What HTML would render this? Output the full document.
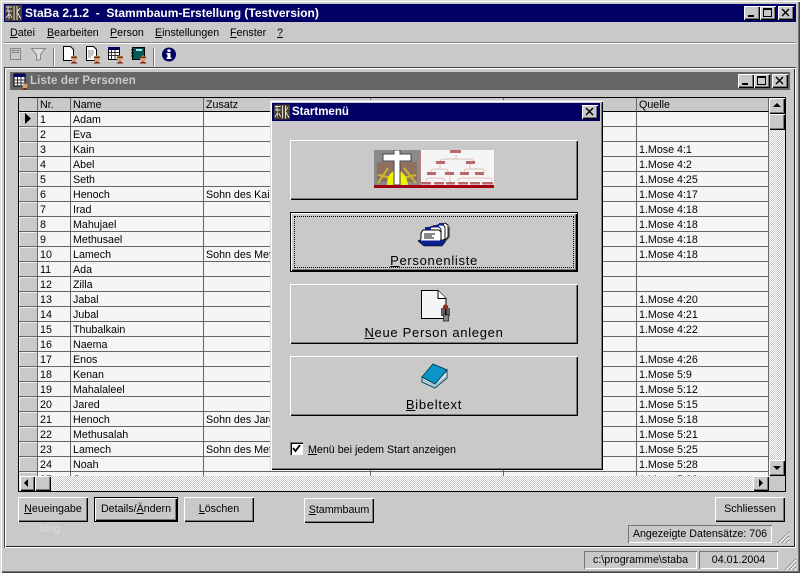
<!DOCTYPE html>
<html><head><meta charset="utf-8"><style>
*{box-sizing:border-box}
html,body{margin:0;padding:0}
body{width:800px;height:573px;overflow:hidden;position:relative;background:#c9c9c9;font:10.7px/14px "Liberation Sans",Arial,sans-serif;color:#000}
.a{position:absolute}
u{text-decoration:underline}
.t{position:absolute;white-space:nowrap}
.btn{position:absolute;background:#c9c9c9;box-shadow:inset 1px 1px 0 #fff,inset -1px -1px 0 #000,inset -2px -2px 0 #777;text-align:center;white-space:nowrap}
.wb{position:absolute;width:16px;height:14px;background:#c9c9c9;box-shadow:inset 1px 1px 0 #fff,inset -1px -1px 0 #000,inset -2px -2px 0 #777}
.dith{position:absolute;background:repeating-conic-gradient(#fff 0 25%,#c9c9c9 0 50%) 0 0/2px 2px}
.sunk{position:absolute;box-shadow:inset 1px 1px 0 #777,inset -1px -1px 0 #fff;text-align:center;white-space:nowrap;line-height:19px}
table{border-collapse:separate;border-spacing:0;table-layout:fixed;width:750px;font-size:10.7px}
td,th{height:15px;padding:2px 0 0 2px;font-weight:normal;text-align:left;border-right:1px solid #666;border-bottom:1px solid #666;background:#f5f5f5;white-space:nowrap;overflow:hidden;line-height:12px;vertical-align:top}
th{height:14px;background:#c9c9c9;border-bottom-color:#000;line-height:11px}
td:first-child{background:#c9c9c9;padding:0;box-shadow:inset 1px 1px 0 #eee}
.big{font:13px/15px "Liberation Sans",Arial,sans-serif;letter-spacing:.7px;position:absolute;left:0;right:0;text-align:center}
</style></head><body>
<div class="a" style="left:0;top:0;width:800px;height:573px;box-shadow:inset 1px 1px 0 #ddd,inset 2px 2px 0 #fff,inset -1px -1px 0 #444,inset -2px -2px 0 #777"></div>

<div class="a" style="left:4px;top:4px;width:792px;height:18px;background:#000066"></div>
<svg class="a" style="left:5px;top:5px" width="17" height="16" viewBox="0 0 17 16" shape-rendering="crispEdges"><rect width="17" height="16" fill="#4a4030"/><path d="M1 2h6M3 2v4M1 6h6M4 6v8M1 13l3-4M7 13L5 9M9 1v14M12 1v14M15 3l-3 4 4 7" stroke="#e4e0d8" fill="none"/></svg>
<div class="t" style="left:25px;top:5px;color:#fff;font:bold 12px/16px 'Liberation Sans',sans-serif;white-space:pre">StaBa 2.1.2  -  Stammbaum-Erstellung (Testversion)</div>
<div class="wb" style="left:744px;top:6px"><div class="a" style="left:4px;top:9px;width:6px;height:2px;background:#000"></div></div>
<div class="wb" style="left:760px;top:6px"><div class="a" style="left:3px;top:2px;width:9px;height:9px;border:1px solid #000;border-top-width:2px"></div></div>
<div class="wb" style="left:778px;top:6px"><svg class="a" style="left:3px;top:2px" width="9" height="9" viewBox="0 0 9 9"><path d="M1 1l7 7M8 1l-7 7" stroke="#000" stroke-width="1.4"/></svg></div>

<div class="t" style="left:10px;top:26px"><u>D</u>atei</div>
<div class="t" style="left:47px;top:26px"><u>B</u>earbeiten</div>
<div class="t" style="left:110px;top:26px"><u>P</u>erson</div>
<div class="t" style="left:155px;top:26px"><u>E</u>instellungen</div>
<div class="t" style="left:230px;top:26px"><u>F</u>enster</div>
<div class="t" style="left:277px;top:26px"><u>?</u></div>
<div class="a" style="left:4px;top:42px;width:792px;height:1px;background:#888"></div>
<div class="a" style="left:4px;top:43px;width:792px;height:1px;background:#fff"></div>

<svg class="a" style="left:0;top:44px" width="190" height="22" viewBox="0 0 190 22">
<path d="M53.5 4v18" stroke="#777"/><path d="M54.5 4v18" stroke="#fff"/>
<path d="M153.5 4v18" stroke="#777"/><path d="M154.5 4v18" stroke="#fff"/>
<circle cx="169" cy="10.5" r="7" fill="#000066"/><rect x="167.5" y="5.5" width="3" height="2.5" fill="#fff"/><path d="M166.5 9h4v4.500h1v1.500h-5v-1.500h1v-3h-1z" fill="#fff"/>
<g transform="translate(0,-3)">
<rect x="10.5" y="7.5" width="10" height="11" fill="none" stroke="#888"/><rect x="12.5" y="9.5" width="6" height="2" fill="none" stroke="#888"/>
<path d="M31.5 7.5h14l-5 6v5l-4 1v-6z" fill="#ddd" stroke="#888"/>
<path d="M63.5 5.500h7l3 3v11h-10z" fill="#fff" stroke="#000"/>
<circle cx="74" cy="17.500" r="3" fill="#d8a070"/><path d="M71 15.500h6v1.500h-6z" fill="#703010"/><path d="M70.500 22.500q3.500-4 7 0z" fill="#802010"/>
<path d="M86.500 5.500h7l3 3v11h-10z" fill="#fff" stroke="#000"/><path d="M88 10h6M88 12h6M88 14h5M88 16h3" stroke="#888"/>
<circle cx="97" cy="17.500" r="3" fill="#d8a070"/><path d="M94 15.500h6v1.500h-6z" fill="#703010"/><path d="M93.500 22.500q3.500-4 7 0z" fill="#802010"/>
<rect x="108.500" y="6.500" width="11" height="12" fill="#fff" stroke="#000"/><rect x="108" y="6" width="12" height="3" fill="#000060"/><path d="M111.500 9v9M115 9v9M109 11.500h10M109 14.500h10" stroke="#333"/>
<circle cx="120" cy="17.500" r="3" fill="#d8a070"/><path d="M117 15.500h6v1.500h-6z" fill="#703010"/><path d="M116.500 22.500q3.500-4 7 0z" fill="#802010"/>
<rect x="132.500" y="6.500" width="12" height="12" fill="#005a5a" stroke="#000"/><path d="M131 9h3M131 12h3M131 15h3" stroke="#000"/><rect x="136" y="8" width="6" height="2" fill="#bdd"/>
<circle cx="143" cy="17.500" r="3" fill="#d8a070"/><path d="M140 15.500h6v1.500h-6z" fill="#703010"/><path d="M139.500 22.500q3.500-4 7 0z" fill="#802010"/>
</g>
</svg>

<!-- MDI child -->
<div class="a" style="left:4px;top:67px;width:792px;height:481px;box-shadow:inset 1px 1px 0 #444,inset 2px 2px 0 #fff,inset -1px -1px 0 #fff,inset -2px -2px 0 #222"></div>
<div class="a" style="left:10px;top:72px;width:780px;height:18px;background:#666"></div>
<svg class="a" style="left:13px;top:73px" width="17" height="17" viewBox="0 0 17 17"><rect x="1" y="1" width="11" height="12" fill="#fff" stroke="#000"/><rect x="1" y="1" width="11" height="3" fill="#000060"/><path d="M4.500 4v9M8 4v9M1 7h11M1 10h11" stroke="#333"/><circle cx="12" cy="13" r="2.500" fill="#d8a070"/><path d="M9 17q3-4 6 0z" fill="#802010"/></svg>
<div class="t" style="left:30px;top:74px;color:#c9c9c9;font:bold 11.500px/14px 'Liberation Sans',sans-serif;letter-spacing:.13px">Liste der Personen</div>
<div class="wb" style="left:738px;top:74px"><div class="a" style="left:4px;top:9px;width:6px;height:2px;background:#000"></div></div>
<div class="wb" style="left:754px;top:74px"><div class="a" style="left:3px;top:2px;width:9px;height:9px;border:1px solid #000;border-top-width:2px"></div></div>
<div class="wb" style="left:772px;top:74px"><svg class="a" style="left:3px;top:2px" width="9" height="9" viewBox="0 0 9 9"><path d="M1 1l7 7M8 1l-7 7" stroke="#000" stroke-width="1.4"/></svg></div>

<!-- grid -->
<div class="a" style="left:18px;top:97px;width:768px;height:395px;border:1px solid #000;background:#c9c9c9"></div>
<div class="a" style="left:19px;top:98px;width:750px;height:378px;overflow:hidden">
<table><colgroup><col style="width:19px"><col style="width:33px"><col style="width:133px"><col style="width:167px"><col style="width:133px"><col style="width:133px"><col style="width:132px"></colgroup>
<tr><th></th><th>Nr.</th><th>Name</th><th>Zusatz</th><th></th><th></th><th>Quelle</th></tr>
<tr><td><svg width="18" height="14" style="display:block"><path d="M6 1v11l6-5.500z" fill="#000"/></svg></td><td>1</td><td>Adam</td><td></td><td></td><td></td><td></td></tr>
<tr><td></td><td>2</td><td>Eva</td><td></td><td></td><td></td><td></td></tr>
<tr><td></td><td>3</td><td>Kain</td><td></td><td></td><td></td><td>1.Mose 4:1</td></tr>
<tr><td></td><td>4</td><td>Abel</td><td></td><td></td><td></td><td>1.Mose 4:2</td></tr>
<tr><td></td><td>5</td><td>Seth</td><td></td><td></td><td></td><td>1.Mose 4:25</td></tr>
<tr><td></td><td>6</td><td>Henoch</td><td>Sohn des Kain</td><td></td><td></td><td>1.Mose 4:17</td></tr>
<tr><td></td><td>7</td><td>Irad</td><td></td><td></td><td></td><td>1.Mose 4:18</td></tr>
<tr><td></td><td>8</td><td>Mahujael</td><td></td><td></td><td></td><td>1.Mose 4:18</td></tr>
<tr><td></td><td>9</td><td>Methusael</td><td></td><td></td><td></td><td>1.Mose 4:18</td></tr>
<tr><td></td><td>10</td><td>Lamech</td><td>Sohn des Methusael</td><td></td><td></td><td>1.Mose 4:18</td></tr>
<tr><td></td><td>11</td><td>Ada</td><td></td><td></td><td></td><td></td></tr>
<tr><td></td><td>12</td><td>Zilla</td><td></td><td></td><td></td><td></td></tr>
<tr><td></td><td>13</td><td>Jabal</td><td></td><td></td><td></td><td>1.Mose 4:20</td></tr>
<tr><td></td><td>14</td><td>Jubal</td><td></td><td></td><td></td><td>1.Mose 4:21</td></tr>
<tr><td></td><td>15</td><td>Thubalkain</td><td></td><td></td><td></td><td>1.Mose 4:22</td></tr>
<tr><td></td><td>16</td><td>Naema</td><td></td><td></td><td></td><td></td></tr>
<tr><td></td><td>17</td><td>Enos</td><td></td><td></td><td></td><td>1.Mose 4:26</td></tr>
<tr><td></td><td>18</td><td>Kenan</td><td></td><td></td><td></td><td>1.Mose 5:9</td></tr>
<tr><td></td><td>19</td><td>Mahalaleel</td><td></td><td></td><td></td><td>1.Mose 5:12</td></tr>
<tr><td></td><td>20</td><td>Jared</td><td></td><td></td><td></td><td>1.Mose 5:15</td></tr>
<tr><td></td><td>21</td><td>Henoch</td><td>Sohn des Jared</td><td></td><td></td><td>1.Mose 5:18</td></tr>
<tr><td></td><td>22</td><td>Methusalah</td><td></td><td></td><td></td><td>1.Mose 5:21</td></tr>
<tr><td></td><td>23</td><td>Lamech</td><td>Sohn des Methusalah</td><td></td><td></td><td>1.Mose 5:25</td></tr>
<tr><td></td><td>24</td><td>Noah</td><td></td><td></td><td></td><td>1.Mose 5:28</td></tr>
<tr><td></td><td>25</td><td>Sem</td><td></td><td></td><td></td><td>1.Mose 5:32</td></tr>
</table></div>
<!-- v scrollbar -->
<div class="dith" style="left:769px;top:98px;width:16px;height:378px"></div>
<div class="wb" style="left:769px;top:98px;width:16px;height:16px"><div class="a" style="left:4px;top:5px;border:4px solid transparent;border-top:0;border-bottom:4px solid #000"></div></div>
<div class="wb" style="left:769px;top:114px;width:16px;height:16px"></div>
<div class="wb" style="left:769px;top:460px;width:16px;height:16px"><div class="a" style="left:4px;top:6px;border:4px solid transparent;border-bottom:0;border-top:4px solid #000"></div></div>
<!-- h scrollbar -->
<div class="dith" style="left:19px;top:476px;width:750px;height:15px"></div>
<div class="wb" style="left:20px;top:476px;width:15px;height:15px"><div class="a" style="left:4px;top:3px;border:4px solid transparent;border-left:0;border-right:4px solid #000"></div></div>
<div class="wb" style="left:35px;top:476px;width:16px;height:15px"></div>
<div class="wb" style="left:753px;top:476px;width:16px;height:15px"><div class="a" style="left:6px;top:3px;border:4px solid transparent;border-right:0;border-left:4px solid #000"></div></div>
<div class="a" style="left:769px;top:476px;width:16px;height:15px;background:#c9c9c9"></div>

<!-- bottom buttons -->
<div class="btn" style="left:18px;top:497px;width:70px;height:25px;line-height:25px"><u>N</u>eueingabe</div>
<div class="btn" style="left:94px;top:497px;width:84px;height:25px;line-height:23px;border:1px solid #000;box-shadow:inset 1px 1px 0 #fff,inset -1px -1px 0 #000,inset -2px -2px 0 #777">Details/<u>Ä</u>ndern</div>
<div class="btn" style="left:184px;top:497px;width:70px;height:25px;line-height:25px"><u>L</u>öschen</div>
<div class="btn" style="left:304px;top:498px;width:70px;height:25px;line-height:25px"><u>S</u>tammbaum</div>
<div class="btn" style="left:715px;top:497px;width:70px;height:25px;line-height:25px">Schliessen</div>
<div class="t" style="left:40px;top:522px;color:#dcdcdc">blog</div>
<div class="sunk" style="left:628px;top:525px;width:144px;height:18px">Angezeigte Datensätze: 706</div>
<svg class="a" style="left:776px;top:530px" width="14" height="14"><path d="M2 13L13 2M6 13l7-7M10 13l3-3" stroke="#777" fill="none"/><path d="M3 13L13 3M7 13l6-6M11 13l2-2" stroke="#fff" fill="none"/></svg>

<!-- status -->
<div class="sunk" style="left:584px;top:551px;width:113px;height:18px">c:\programme\staba</div>
<div class="sunk" style="left:699px;top:551px;width:79px;height:18px">04.01.2004</div>
<svg class="a" style="left:783px;top:557px" width="14" height="14"><path d="M2 13L13 2M6 13l7-7M10 13l3-3" stroke="#777" fill="none"/><path d="M3 13L13 3M7 13l6-6M11 13l2-2" stroke="#fff" fill="none"/></svg>

<!-- dialog -->
<div class="a" style="left:270px;top:100px;width:333px;height:370px;background:#c9c9c9;box-shadow:inset 1px 1px 0 #ddd,inset 2px 2px 0 #fff,inset -1px -1px 0 #000,inset -2px -2px 0 #777"></div>
<div class="a" style="left:272px;top:103px;width:328px;height:18px;background:#000066"></div>
<svg class="a" style="left:274px;top:104px" width="16" height="16" viewBox="0 0 17 16" shape-rendering="crispEdges"><rect width="17" height="16" fill="#4a4030"/><path d="M1 2h6M3 2v4M1 6h6M4 6v8M1 13l3-4M7 13L5 9M9 1v14M12 1v14M15 3l-3 4 4 7" stroke="#e4e0d8" fill="none"/></svg>
<div class="t" style="left:292px;top:104px;color:#fff;font:bold 11.500px/16px 'Liberation Sans',sans-serif">Startmenü</div>
<div class="wb" style="left:582px;top:105px"><svg class="a" style="left:3px;top:2px" width="9" height="9" viewBox="0 0 9 9"><path d="M1 1l7 7M8 1l-7 7" stroke="#000" stroke-width="1.4"/></svg></div>

<div class="btn" style="left:290px;top:140px;width:288px;height:60px"></div>
<svg class="a" style="left:374px;top:150px;filter:blur(.35px)" width="120" height="38" viewBox="0 0 120 38">
<rect width="46" height="38" fill="#8a8a8a"/><rect x="46" width="74" height="38" fill="#f5f5f5"/>
<rect x="46" width="1" height="35" fill="#c08080"/>
<path d="M3 12h40v20H3z" fill="#8f7060"/>
<path d="M4 33L14 18M42 33L30 18M4 25l14 3M42 25l-13 3" stroke="#c8b830" stroke-width="2" fill="none"/>
<path d="M13 35q0-11 7-14v14zM26 35v-14q7 4 8 14z" fill="#f0f000"/>
<path d="M9 4h11V0h6v4h11v7H26v24h-6V11H9z" fill="#fff" stroke="#444"/>
<rect y="35" width="120" height="3" fill="#a00010"/>
<g fill="none" stroke="#e0c0b8"><path d="M82 5v4M66 12q0-3 6-3h22q6 0 6 3M57 22q0-3 5-3h8q4 0 4 3M66 14v5M96 14v5M90 22q0-3 4-3h12q5 0 5 3"/><path d="M52 31q0-3 5-3h9q5 0 5 3M84 31q0-3 5-3h25q4 0 4 3M76 26v6"/></g>
<g fill="#b86a6a"><rect x="76" y="0" width="11" height="3"/><rect x="62" y="11" width="9" height="3"/><rect x="92" y="11" width="9" height="3"/><rect x="53" y="22" width="9" height="3"/><rect x="71" y="22" width="9" height="3"/><rect x="86" y="22" width="9" height="3"/><rect x="101" y="22" width="9" height="3"/><rect x="47" y="32" width="10" height="2.500"/><rect x="60" y="32" width="10" height="2.500"/><rect x="72" y="32" width="9" height="2.500"/><rect x="84" y="32" width="10" height="2.500"/><rect x="96" y="32" width="10" height="2.500"/><rect x="108" y="32" width="11" height="2.500"/></g>
</svg>

<div class="btn" style="left:290px;top:212px;width:288px;height:60px;border:1px solid #000;box-shadow:inset 1px 1px 0 #fff,inset -1px -1px 0 #000,inset -2px -2px 0 #777"><div class="a" style="left:3px;top:3px;right:3px;bottom:3px;border:1px dotted #000"></div>
<div class="big" style="top:40px"><u>P</u>ersonenliste</div></div>
<svg class="a" style="left:418px;top:221px" width="33" height="26" viewBox="0 0 33 26">
<path d="M7 25l18-1 7-8V5l-6 7z" fill="#666"/>
<path d="M16 5l11-3 3 2v12l-4 4z" fill="#fff" stroke="#000" stroke-width=".9"/>
<path d="M12 6l12-3 3 3v13l-3 2z" fill="#fff" stroke="#000" stroke-width=".9"/>
<path d="M8 7l12-2 3 3v13l-3 1z" fill="#fff" stroke="#000" stroke-width=".9"/>
<path d="M5 9h16l2 2v10H3V12z" fill="#fff" stroke="#000"/>
<path d="M6 13h11M6 15h8M6 17h10" stroke="#111"/>
<path d="M0 20q0-1 2-1h22l3-1v3l-3 4H6z" fill="#0a1f90" stroke="#000" stroke-width=".6"/>
<path d="M3 18.500h19v1H3z" fill="#fff"/>
<path d="M7 6h6v3H7zM15 4h6v2.500h-6zM21 2h5v2.500h-5z" fill="#0a1f90"/>
</svg>

<div class="btn" style="left:290px;top:284px;width:288px;height:60px"><div class="big" style="top:41px"><u>N</u>eue Person anlegen</div></div>
<svg class="a" style="left:420px;top:289px" width="32" height="33" viewBox="0 0 32 33">
<path d="M1.500 1.500h16.500l8 8v20h-24.500z" fill="#f5f5f5" stroke="#000"/>
<path d="M18 1.500v8h8" fill="#fff" stroke="#000"/>
<rect x="21.500" y="19.500" width="8" height="7" fill="#606060" stroke="#602080" stroke-width=".8"/>
<rect x="23.500" y="26" width="5" height="6" fill="#888" stroke="#222" stroke-width=".8"/>
<circle cx="25.500" cy="18" r="2.600" fill="#903018"/><rect x="25" y="20" width="1.500" height="6" fill="#111"/>
</svg>

<div class="btn" style="left:290px;top:356px;width:288px;height:60px"><div class="big" style="top:41px"><u>B</u>ibeltext</div></div>
<svg class="a" style="left:420px;top:363px" width="28" height="26" viewBox="0 0 28 26">
<path d="M2 14v5l13 6 12-10V7L15 21z" fill="#dce8ee" stroke="#0a4a60"/>
<path d="M3 17l12 6 11-9" stroke="#8ab0c0" fill="none"/>
<path d="M2 14L13 1l14 6-12 14z" fill="#0a94c8" stroke="#0a4a60"/>
</svg>

<div class="a" style="left:290px;top:442px;width:13px;height:13px;background:#fff;box-shadow:inset 1px 1px 0 #777,inset 2px 2px 0 #000"><svg class="a" style="left:2px;top:2px" width="9" height="9" viewBox="0 0 9 9"><path d="M1 4l2.500 3L8 1" stroke="#000" stroke-width="1.800" fill="none"/></svg></div>
<div class="t" style="left:308px;top:443px"><u>M</u>enü bei jedem Start anzeigen</div>
</body></html>
